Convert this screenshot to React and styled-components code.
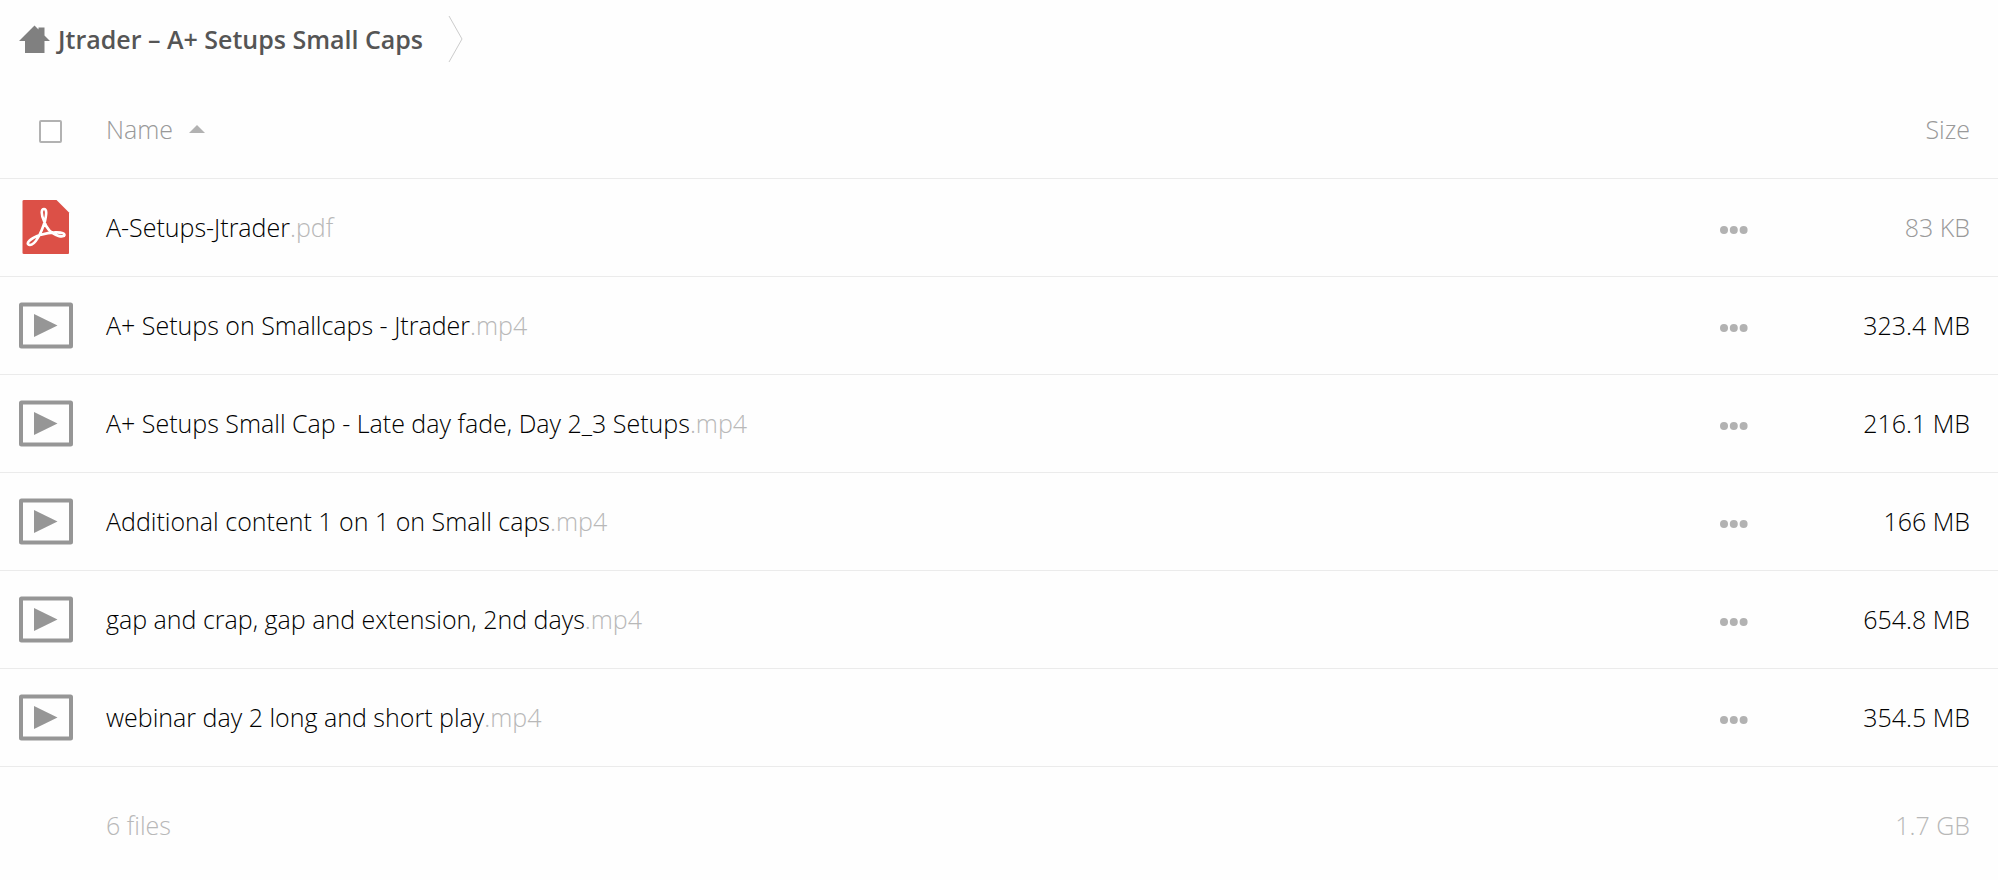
import React, { useState } from "react";
import styled, { createGlobalStyle } from "styled-components";

const GlobalStyle = createGlobalStyle`
  *, *::before, *::after { box-sizing: border-box; }
  body {
    margin: 0;
    background: #fefefe;
    color: #000;
    font-family: "Open Sans", sans-serif;
    font-size: 25px;
    font-weight: 300;
    line-height: 34px;
  }
`;

const Page = styled.main`
  width: 100%;
`;

const Breadcrumbs = styled.nav`
  display: flex;
  align-items: center;
  gap: 25px;
  height: 78px;
  padding: 0 18px;
`;

const HomeLink = styled.a`
  display: flex;
  align-items: center;
  gap: 8px;
  color: #555;
  font-weight: 600;
  text-decoration: none;
  white-space: nowrap;
`;

const FileTable = styled.table`
  width: 100%;
  border-collapse: collapse;
  table-layout: fixed;
`;

const IconColumn = styled.col`
  width: 106px;
`;

const ActionColumn = styled.col`
  width: 80px;
`;

const SizeColumn = styled.col`
  width: 198px;
`;

const Row = styled.tr`
  height: ${(p) => (p.$head ? "100px" : "98px")};
  border-bottom: 1px solid #ebebeb;
`;

const FooterRow = styled.tr`
  height: 118px;
  color: #b8b8b8;
`;

const HeadCell = styled.th`
  padding: 2px 0 0;
  color: #999;
  font-weight: 300;
  text-align: left;
`;

const SizeHead = styled(HeadCell)`
  padding-right: 28px;
  text-align: right;
`;

const CheckCell = styled(HeadCell)`
  padding: 8px 0 0 39px;
`;

const Checkbox = styled.input`
  display: block;
  width: 23px;
  height: 23px;
  margin: 0;
  appearance: none;
  border: 2px solid #b2b2b2;
  border-radius: 2px;
  background: #fff;
  &:checked { background: #999; }
`;

const SortButton = styled.button`
  display: flex;
  align-items: center;
  gap: 16px;
  padding: 0;
  border: 0;
  background: none;
  color: inherit;
  font: inherit;
  cursor: pointer;
`;

const Cell = styled.td`
  padding: 0;
`;

const IconCell = styled(Cell)`
  padding-left: 18px;
`;

const SizeCell = styled(Cell)`
  padding-right: 28px;
  color: ${(p) => (p.$muted ? "#999" : "inherit")};
  text-align: right;
`;

const FileLink = styled.a`
  color: inherit;
  text-decoration: none;
  white-space: nowrap;
`;

const Extension = styled.span`
  color: #b8b8b8;
`;

const MoreButton = styled.button`
  display: block;
  padding: 5px 0 0;
  border: 0;
  background: none;
  cursor: pointer;
`;

const Icon = styled.svg`
  display: block;
  flex: none;
`;

const HomeIcon = () => (
  <Icon width="32" height="30" viewBox="0 0 32 30" aria-hidden="true">
    <path fill="#808080" d="M16.5 1.500 1 17h6v12h19.500V17H32l-5.500-5.500V3.500h-6v2z" />
  </Icon>
);

const CrumbArrow = () => (
  <Icon width="16" height="48" viewBox="0 0 16 48" aria-hidden="true">
    <path fill="none" stroke="#ccc" strokeWidth="1" d="M1 1 14 24 1 47" />
  </Icon>
);

const SortArrow = () => (
  <Icon width="16" height="8" viewBox="0 0 16 8" aria-hidden="true">
    <path fill="#b2b2b2" d="M8 0 16 8H0z" />
  </Icon>
);

const PdfIcon = () => (
  <Icon width="56" height="56" viewBox="0 0 56 56" aria-hidden="true">
    <path fill="#dc5047" d="M6 1h32.500L51 13.500V54q0 1-1 1H6q-1.500 0-1.500-1V2q0-1 1.500-1z" />
    <path
      fill="none"
      stroke="#fff"
      strokeWidth="2.600"
      strokeLinejoin="round"
      d="M26 22C23 15 23 10 26 10C29 10 28.500 15 27 22C23 35 17 46 12 46C6 45 13 39 22 36C32 33 46 32 46.500 36C46 39 36 37 31 31Q28 28 26 22z"
    />
  </Icon>
);

const VideoIcon = () => (
  <Icon width="56" height="56" viewBox="0 0 56 56" aria-hidden="true">
    <rect x="3" y="7.500" width="50" height="42" rx="0.500" fill="none" stroke="#969696" strokeWidth="4" />
    <path fill="#969696" d="M16 17 39.500 28.500 16 40z" />
  </Icon>
);

const DotsIcon = () => (
  <Icon width="28" height="8" viewBox="0 0 28 8" fill="#b2b2b2" aria-hidden="true">
    <circle cx="4" cy="4" r="4" />
    <circle cx="13.800" cy="4" r="4" />
    <circle cx="23.600" cy="4" r="4" />
  </Icon>
);

const files = [
  { name: "A-Setups-Jtrader", ext: ".pdf", size: "83 KB", muted: true },
  { name: "A+ Setups on Smallcaps - Jtrader", ext: ".mp4", size: "323.4 MB" },
  { name: "A+ Setups Small Cap - Late day fade, Day 2_3 Setups", ext: ".mp4", size: "216.1 MB" },
  { name: "Additional content 1 on 1 on Small caps", ext: ".mp4", size: "166 MB" },
  { name: "gap and crap, gap and extension, 2nd days", ext: ".mp4", size: "654.8 MB" },
  { name: "webinar day 2 long and short play", ext: ".mp4", size: "354.5 MB" },
];

export default function App() {
  const [allSelected, setAllSelected] = useState(false);
  return (
    <Page>
      <GlobalStyle />
      <Breadcrumbs aria-label="Breadcrumb">
        <HomeLink href="#">
          <HomeIcon />
          Jtrader – A+ Setups Small Caps
        </HomeLink>
        <CrumbArrow />
      </Breadcrumbs>
      <FileTable>
        <colgroup>
          <IconColumn />
          <col />
          <ActionColumn />
          <SizeColumn />
        </colgroup>
        <thead>
          <Row $head>
            <CheckCell>
              <Checkbox
                type="checkbox"
                aria-label="Select all"
                checked={allSelected}
                onChange={(e) => setAllSelected(e.target.checked)}
              />
            </CheckCell>
            <HeadCell colSpan={2} aria-sort="ascending">
              <SortButton type="button">
                Name
                <SortArrow />
              </SortButton>
            </HeadCell>
            <SizeHead>Size</SizeHead>
          </Row>
        </thead>
        <tbody>
          {files.map((file) => (
            <Row key={file.name}>
              <IconCell>{file.ext === ".pdf" ? <PdfIcon /> : <VideoIcon />}</IconCell>
              <Cell>
                <FileLink href="#">
                  {file.name}
                  <Extension>{file.ext}</Extension>
                </FileLink>
              </Cell>
              <Cell>
                <MoreButton type="button" aria-label={`Actions for ${file.name}`}>
                  <DotsIcon />
                </MoreButton>
              </Cell>
              <SizeCell $muted={file.muted}>{file.size}</SizeCell>
            </Row>
          ))}
        </tbody>
        <tfoot>
          <FooterRow>
            <Cell />
            <Cell colSpan={2}>6 files</Cell>
            <SizeCell>1.7 GB</SizeCell>
          </FooterRow>
        </tfoot>
      </FileTable>
    </Page>
  );
}
